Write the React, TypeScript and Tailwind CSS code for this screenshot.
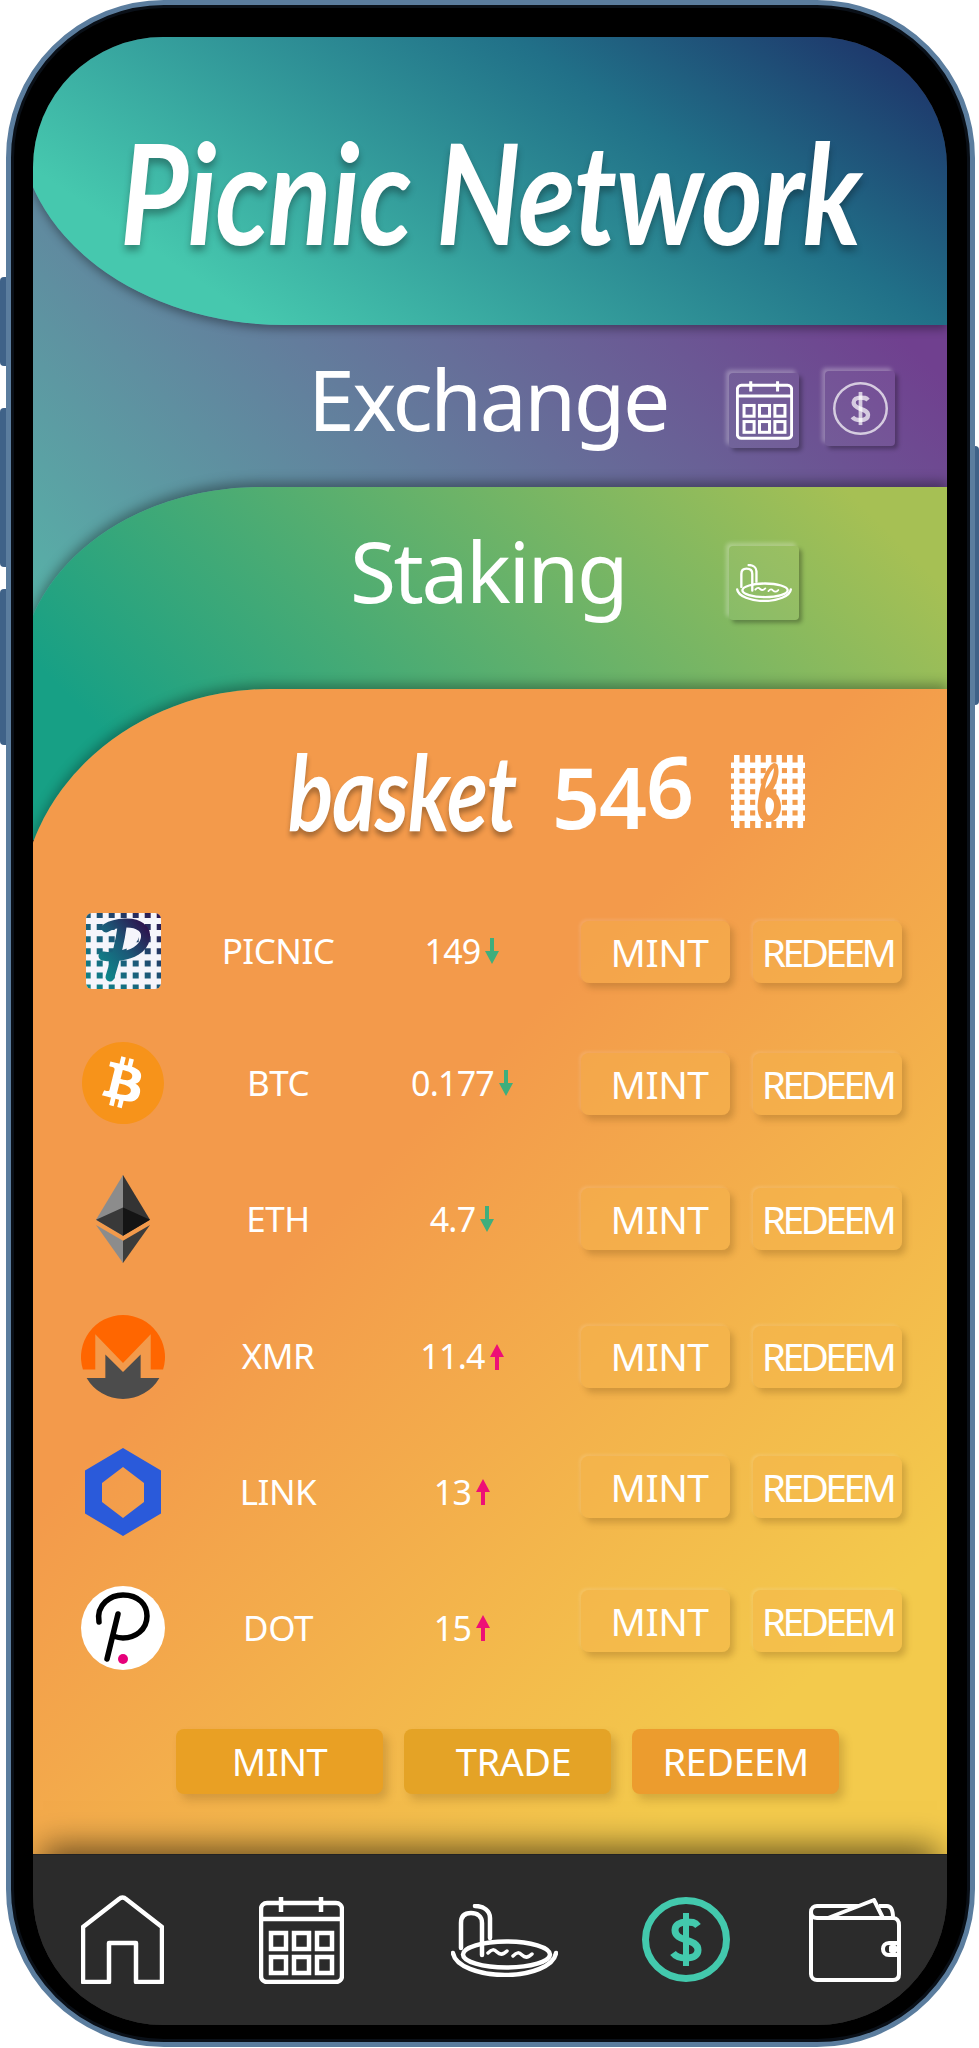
const sans = "font-['Noto_Sans',sans-serif]"

const Calendar = ({ className }: { className: string }) => (
  <svg viewBox="0 0 85 87" fill="none" stroke="currentColor" strokeWidth="4.5" className={className}>
    <rect x="2" y="6" width="81" height="79" rx="6" />
    <path d="M2 22h81M22 0v15M62 0v15" />
    <rect x="12" y="36" width="15" height="16" />
    <rect x="35" y="36" width="15" height="16" />
    <rect x="58" y="36" width="15" height="16" />
    <rect x="12" y="60" width="15" height="16" />
    <rect x="35" y="60" width="15" height="16" />
    <rect x="58" y="60" width="15" height="16" />
  </svg>
)

const Pool = ({ className }: { className: string }) => (
  <svg viewBox="0 0 107 73" fill="none" stroke="currentColor" strokeWidth="4.5" strokeLinecap="round" className={className}>
    <path d="M10 44V19C10 12 14 9 20 9C26 9 31 12 31 19V51" />
    <path d="M24 2C33 2 39 7 39 14V34" />
    <ellipse cx="55.5" cy="50.5" rx="43.5" ry="13" />
    <path d="M2 49C4 62 28 71 54 71C80 71 103 62 105 49" />
    <path d="M37 49c4-4 6-4 9-1s6 3 10-1M62 52c4-4 6-4 9-1s6 3 10-1" strokeWidth="3.5" />
  </svg>
)

const Dollar = ({ className, ring }: { className: string; ring: number }) => (
  <svg viewBox="0 0 88 85" fill="none" stroke="currentColor" className={className}>
    <ellipse cx="44" cy="42.5" rx={44 - ring / 2} ry={42.5 - ring / 2} strokeWidth={ring} />
    <path d="M44 16v53" strokeWidth="6" />
    <path d="M56 29C53 25 50 25 44 25C38 25 33 28 33 33C33 39 38 41 44 43C50 45 56 47 56 53C56 58 52 61 44 61C38 61 34 60 31 56" strokeWidth="7" />
  </svg>
)

const Home = ({ className }: { className: string }) => (
  <svg viewBox="0 0 83 89" fill="none" stroke="currentColor" strokeWidth="4.5" strokeLinejoin="round" className={className}>
    <path d="M2 32L38 4C40 2 43 2 45 4L81 32V87H55V48H28V87H2Z" />
  </svg>
)

const Wallet = ({ className }: { className: string }) => (
  <svg viewBox="0 0 92 84" fill="none" stroke="currentColor" strokeWidth="4" strokeLinejoin="round" className={className}>
    <path d="M2 14V76C2 80 5 82 8 82H84C88 82 90 80 90 76V27C90 23 88 20 84 20H8C4 20 2 17 2 14C2 10 5 8 8 8H50" />
    <path d="M19 20L65 2L74 20M70 8H78C82 8 84 12 84 20" />
    <path d="M90 45H80C72 45 72 57 80 57H90" />
    <rect x="82" y="49" width="4" height="4" />
  </svg>
)

const PicnicLogo = () => (
  <svg viewBox="0 0 75 76" className="w-[75px] h-[76px]">
    <defs>
      <linearGradient id="picnicGrad" x1="0" y1="1" x2="1" y2="0">
        <stop offset="0" stopColor="#0d8a8c" />
        <stop offset="0.5" stopColor="#1b5a78" />
        <stop offset="1" stopColor="#2d0f4c" />
      </linearGradient>
      <clipPath id="picnicClip">
        <rect width="75" height="76" rx="6" />
      </clipPath>
    </defs>
    <g clipPath="url(#picnicClip)">
      <rect width="75" height="76" fill="#f5f5fb" />
      <path fill="url(#picnicGrad)" d={Array.from({ length: 49 }, (_, i) => `M${(i % 7) * 12 - 1.3} ${Math.floor(i / 7) * 12.1 - 1}h6v6h-6z`).join("")} />
      <path d="M36 15C46 11 55 16 53 24C51 32 42 36 32 38Z" fill="#f5f5fb" />
      <path d="M20 15C30 9 48 8 55 14C63 20 60 32 50 38C42 43 28 45 17 43M36 14C34 30 29 48 24 64" stroke="url(#picnicGrad)" strokeWidth="9" strokeLinecap="round" fill="none" />
    </g>
  </svg>
)

const BasketLogo = () => (
  <svg viewBox="0 0 74 73" className="w-[74px] h-[73px]">
    {[0, 1, 2, 3, 4, 5, 6].map((i) => (
      <rect key={i} x={3 + i * 10.6} y="0" width="5.5" height="73" fill="#fff" />
    ))}
    {[0, 1, 2, 3, 4, 5].map((i) => (
      <rect key={i} x="0" y={7.5 + i * 10.6} width="74" height="5.5" fill="#fff" />
    ))}
    <path d="M43 8C36 10 29 28 27 46C25 60 30 67 37 67C45 67 50 60 50 52C50 44 46 38 41 36C45 30 49 20 47 12C47 9 45 8 43 8Z" fill="#f39b4a" />
    <path d="M43 13C38 18 35 26 34 34C38 30 43 22 43 13ZM37 42C34 44 33 56 37 60C40 62 43 56 43 50C43 46 41 43 37 42Z" fill="#fff" />
  </svg>
)

const BtcLogo = () => (
  <svg viewBox="0 0 64 64" className="w-[82px] h-[82px]">
    <path fill="#f7931a" d="M63.033 39.744c-4.274 17.143-21.637 27.576-38.782 23.301C7.116 58.77-3.317 41.406.96 24.265 5.231 7.12 22.594-3.314 39.734.96c17.144 4.274 27.576 21.64 23.299 38.784z" />
    <path fill="#fff" d="M46.103 27.444c.637-4.258-2.605-6.547-7.038-8.074l1.438-5.768-3.511-.875-1.4 5.616c-.923-.23-1.871-.447-2.813-.662l1.41-5.653-3.509-.875-1.439 5.766c-.764-.174-1.514-.346-2.242-.527l.004-.018-4.842-1.209-.934 3.75s2.605.597 2.55.634c1.422.355 1.679 1.296 1.636 2.042l-1.638 6.571c.098.025.225.061.365.117l-.371-.092-2.297 9.205c-.174.432-.615 1.08-1.609.834.035.051-2.552-.637-2.552-.637l-1.743 4.019 4.569 1.139c.85.213 1.683.436 2.503.646l-1.453 5.834 3.507.875 1.439-5.772c.958.26 1.888.5 2.798.726l-1.434 5.745 3.511.875 1.453-5.823c5.987 1.133 10.489.676 12.384-4.739 1.527-4.36-.076-6.875-3.226-8.515 2.294-.529 4.022-2.038 4.483-5.155zM38.08 38.693c-1.085 4.36-8.426 2.003-10.806 1.412l1.928-7.729c2.38.594 10.012 1.77 8.878 6.317zm1.086-11.312c-.99 3.966-7.1 1.951-9.082 1.457l1.748-7.01c1.982.494 8.365 1.416 7.334 5.553z" />
  </svg>
)

const EthLogo = () => (
  <svg viewBox="0 0 256 417" preserveAspectRatio="none" className="w-[54px] h-[88px]">
    <polygon fill="#343434" points="128,0 125,9.5 125,285 128,288 256,212" />
    <polygon fill="#8c8c8c" points="128,0 0,212 128,288 128,154" />
    <polygon fill="#3c3c3b" points="128,312 126,314 126,412 128,417 256,237" />
    <polygon fill="#8c8c8c" points="128,417 128,312 0,237" />
    <polygon fill="#141414" points="128,288 256,212 128,154" />
    <polygon fill="#393939" points="0,212 128,288 128,154" />
  </svg>
)

const XmrLogo = () => (
  <svg viewBox="0 0 100 100" className="w-[84px] h-[84px]">
    <path fill="#ff6600" d="M2.3 65A50 50 0 1 1 97.7 65H83V23L50 57L17 23V65Z" />
    <path fill="#4c4c4c" d="M6.7 75H29V47L50 68L71 47V75H93.3A50 50 0 0 1 6.7 75Z" />
  </svg>
)

const LinkLogo = () => (
  <svg viewBox="0 0 76 88" className="w-[76px] h-[88px]">
    <path fill="#2a5ada" fillRule="evenodd" d="M38 0L76 22.5V65.5L38 88L0 65.5V22.5ZM38 19L17 35V54L38 70L59 54V35Z" />
  </svg>
)

const DotLogo = () => (
  <svg viewBox="0 0 84 84" className="w-[84px] h-[84px]">
    <circle cx="42" cy="42" r="42" fill="#fff" />
    <path d="M18 36C15 18 30 9 42 9C58 9 66 19 66 30C66 44 54 52 42 52C38 52 35 51 32 50M37 28L26 73" fill="none" stroke="#000" strokeWidth="5.5" strokeLinecap="round" />
    <circle cx="42" cy="73" r="5" fill="#e6007a" />
  </svg>
)

const rows = [
  { logo: <PicnicLogo />, name: "PICNIC", value: "149", up: false, row: "h-[132px]", shift: "mt-[2px]" },
  { logo: <BtcLogo />, name: "BTC", value: "0.177", up: false, row: "h-[132px]", shift: "mt-[2px]" },
  { logo: <EthLogo />, name: "ETH", value: "4.7", up: false, row: "h-[140px]", shift: "" },
  { logo: <XmrLogo />, name: "XMR", value: "11.4", up: true, row: "h-[135px]", shift: "" },
  { logo: <LinkLogo />, name: "LINK", value: "13", up: true, row: "h-[136px]", shift: "-mt-[10px]" },
  { logo: <DotLogo />, name: "DOT", value: "15", up: true, row: "h-[136px]", shift: "-mt-[14px]" },
]

const Arrow = ({ up }: { up: boolean }) => (
  <svg viewBox="0 0 14 26" className={`w-[14px] h-[26px] ml-[5px] ${up ? "text-[#ee0f76]" : "text-[#3fae7c]"}`} fill="currentColor">
    {up ? <path d="M7 0L14 13H9V26H5V13H0Z" /> : <path d="M5 0H9V13H14L7 26L0 13H5Z" />}
  </svg>
)

const softShadow = "shadow-[4px_5px_6px_rgba(120,80,20,0.28),-2px_-2px_3px_rgba(255,255,255,0.12)]"
const tileShadow = "shadow-[3px_3px_4px_rgba(0,0,0,0.3),-3px_-3px_4px_rgba(255,255,255,0.3)]"

const RowButton = ({ label, tight }: { label: string; tight?: boolean }) => (
  <div className={`w-[149px] h-[62px] rounded-lg bg-[#f5b54b]/40 flex items-center justify-center text-white text-[39px] ${softShadow} ${tight ? "tracking-[-3.6px]" : "pl-2 tracking-[-0.5px]"}`}>
    {label}
  </div>
)

const BigButton = ({ label, color }: { label: string; color: string }) => (
  <div className={`w-[207px] h-[65px] rounded-lg flex items-center justify-center text-white text-[38px] tracking-[-0.5px] shadow-[5px_6px_8px_rgba(120,80,20,0.25)] ${color}`}>
    {label}
  </div>
)

export default function App() {
  return (
    <div className={`relative w-[979px] h-[2048px] bg-white overflow-hidden ${sans}`}>
      {/* side buttons */}
      <div className="absolute left-0 top-[277px] w-2 h-[89px] rounded-l bg-[#3f6288]" />
      <div className="absolute left-0 top-[408px] w-2 h-[159px] rounded-l bg-[#3f6288]" />
      <div className="absolute left-0 top-[589px] w-2 h-[156px] rounded-l bg-[#3f6288]" />
      <div className="absolute right-0 top-[446px] w-2 h-[259px] rounded-r bg-[#3f6288]" />

      {/* phone body */}
      <div className="absolute left-[6px] top-0 w-[969px] h-[2047px] rounded-[158px] bg-[#000] border-[5px] border-[#5b7d9e] shadow-[inset_0_0_0_3px_#0a1018] pt-[32px] pl-[22px]">
        <div className="w-[914px] h-[1988px] rounded-[130px] overflow-hidden flex flex-col bg-[#2b2b2b]">
          {/* header */}
          <div className="relative z-30 -ml-[13px] h-[288px] shrink-0 rounded-bl-[265px_200px] bg-[linear-gradient(34deg,#46c8ae_18%,#217088_68%,#1d2b65_100%)] shadow-[0_4px_10px_rgba(0,0,0,0.35)] flex items-center pl-[100px] pt-[22px]">
            <span className="font-['Lato',sans-serif] italic font-bold text-white text-[118px] leading-none tracking-[-1px] whitespace-nowrap scale-y-[1.18] [text-shadow:0_5px_7px_rgba(0,0,0,0.3)]">
              Picnic Network
            </span>
          </div>

          {/* exchange */}
          <div className="relative z-20 -mt-[150px] h-[465px] shrink-0 bg-[linear-gradient(45deg,#57b4a8_0%,#70408f_85%)] flex items-start pt-[179px] pl-[275px]">
            <span className="text-white text-[84px] leading-[90px] tracking-[-2.5px] w-[421px]">Exchange</span>
            <div className={`mt-[19px] w-[70px] h-[75px] rounded bg-white/5 text-white flex items-center justify-center ${tileShadow}`}>
              <Calendar className="w-[57px] h-[59px]" />
            </div>
            <div className={`mt-[17px] ml-[26px] w-[70px] h-[75px] rounded bg-white/5 text-white/70 flex items-center justify-center ${tileShadow}`}>
              <Dollar className="w-[55px] h-[55px]" ring={4} />
            </div>
          </div>

          {/* staking */}
          <div className="relative z-20 -ml-[13px] -mt-[153px] h-[353px] shrink-0 rounded-tl-[240px_190px] bg-[linear-gradient(45deg,#17a085_15%,#a6c054_92%)] shadow-[0_-5px_12px_rgba(0,0,0,0.35)] flex items-start pt-[39px] pl-[330px]">
            <span className="text-white text-[84px] leading-[90px] tracking-[-2.5px] w-[379px]">Staking</span>
            <div className={`mt-[20px] w-[70px] h-[74px] rounded bg-white/5 text-white flex items-center justify-center ${tileShadow}`}>
              <Pool className="w-[56px] h-[38px]" />
            </div>
          </div>

          {/* basket */}
          <div className="relative z-20 -ml-[13px] -mt-[151px] h-[1165px] shrink-0 rounded-tl-[250px_225px] bg-[linear-gradient(135deg,#f39a4b_40%,#f3ca4c_85%)] shadow-[0_-5px_12px_rgba(0,0,0,0.3)] flex flex-col">
            <div className="h-[158px] shrink-0 flex items-center pl-[268px] pt-[46px] text-white">
              <span className="font-['Lato',sans-serif] italic font-bold text-[84px] leading-none w-[264px] tracking-[-1px] scale-y-[1.25] origin-left [text-shadow:0_4px_5px_rgba(0,0,0,0.3)]">basket</span>
              <span className="font-semibold text-[84px] leading-none tracking-[-1px] w-[179px]">
                54<span className="align-[11px]">6</span>
              </span>
              <BasketLogo />
            </div>

            <div className="mt-[38px] pl-[13px] flex flex-col">
              {rows.map((r) => (
                <div key={r.name} className={`grid grid-cols-[180px_130px_238px_1fr] items-center ${r.row}`}>
                  <div className="flex justify-center">{r.logo}</div>
                  <div className="text-center text-white text-[35px] tracking-[-0.5px]">{r.name}</div>
                  <div className="flex items-center justify-center text-white text-[34px] tracking-[-0.8px]">
                    {r.value}
                    <Arrow up={r.up} />
                  </div>
                  <div className={`flex gap-[23px] ${r.shift}`}>
                    <RowButton label="MINT" />
                    <RowButton label="REDEEM" tight />
                  </div>
                </div>
              ))}
            </div>

            <div className="mt-[33px] flex gap-[21px] pl-[156px]">
              <BigButton label="MINT" color="bg-[#e9a024]" />
              <BigButton label="TRADE" color="bg-[#e4a326] pl-3" />
              <BigButton label="REDEEM" color="bg-[#ec9c2e]" />
            </div>
          </div>

          {/* nav */}
          <div className="relative z-30 flex-1 bg-[#2b2b2b] border-t border-[#222] shadow-[0_-18px_30px_-10px_rgba(0,0,0,0.55)] flex items-start pl-[48px] pt-[40px] text-white">
            <Home className="w-[83px] h-[89px]" />
            <Calendar className="ml-[95px] mt-[2px] w-[85px] h-[87px]" />
            <Pool className="ml-[107px] mt-[9px] w-[107px] h-[73px]" />
            <Dollar className="ml-[84px] mt-[2px] w-[88px] h-[85px] text-[#43c9ad]" ring={7} />
            <Wallet className="ml-[79px] mt-[3px] w-[92px] h-[84px]" />
          </div>
        </div>
      </div>
    </div>
  )
}
